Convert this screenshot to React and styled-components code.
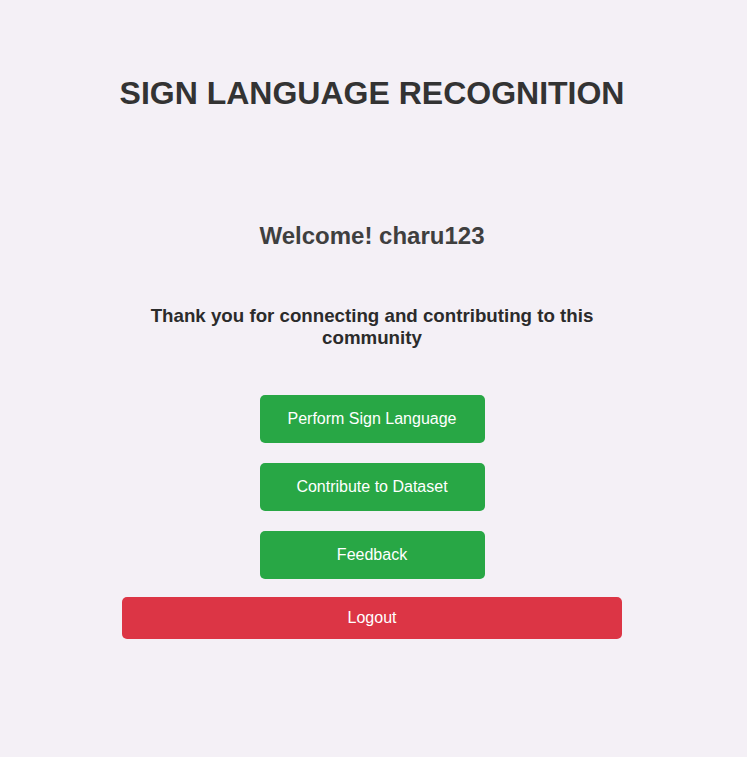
import React from 'react'
import styled, { createGlobalStyle } from 'styled-components'

const GlobalStyle = createGlobalStyle`
    body {
        margin: 0;
        background-color: #f4f0f6;
        font-family: "Liberation Sans", Arial, sans-serif;
    }
`;

const Page = styled.div`
    min-height: 100vh;
    display: flex;
    flex-direction: column;
    align-items: center;
    padding: 75px 3px 0 0;
    box-sizing: border-box;
`;
const Title = styled.h1`
    margin: 0;
    font-size: 32px;
    font-weight: 700;
    color: #333333;
    text-align: center;
`;
const Wrapper = styled.div`
    width: 500px;
    margin-top: 110px;
    display: flex;
    flex-direction: column;
    align-items: center;
`;
const Welcome = styled.h2`
    margin: 0;
    font-size: 24px;
    font-weight: 700;
    color: #3f3f3f;
    text-align: center;
`;
const Message = styled.h3`
    margin: 55px 0 0;
    font-size: 18.72px;
    line-height: 22px;
    font-weight: 700;
    color: #2b2b2b;
    text-align: center;
`;
const Actions = styled.div`
    margin-top: 46px;
    display: flex;
    flex-direction: column;
    align-items: center;
    gap: 20px;
    width: 100%;
`;
const ActionButton = styled.button`
    width: 225px;
    height: 48px;
    border: none;
    border-radius: 5px;
    background-color: #28a745;
    color: white;
    font-family: inherit;
    font-size: 16px;
    cursor: pointer;
`;
const LogoutButton = styled.button`
    width: 100%;
    height: 42px;
    margin-top: 18px;
    border: none;
    border-radius: 5px;
    background-color: #dc3545;
    color: white;
    font-family: inherit;
    font-size: 16px;
    cursor: pointer;
`;

export default function App() {
  return (
    <>
      <GlobalStyle />
      <Page>
        <Title>SIGN LANGUAGE RECOGNITION</Title>
        <Wrapper>
          <Welcome>Welcome! charu123</Welcome>
          <Message>Thank you for connecting and contributing to this community</Message>
          <Actions>
            <ActionButton>Perform Sign Language</ActionButton>
            <ActionButton>Contribute to Dataset</ActionButton>
            <ActionButton>Feedback</ActionButton>
          </Actions>
          <LogoutButton>Logout</LogoutButton>
        </Wrapper>
      </Page>
    </>
  )
}
